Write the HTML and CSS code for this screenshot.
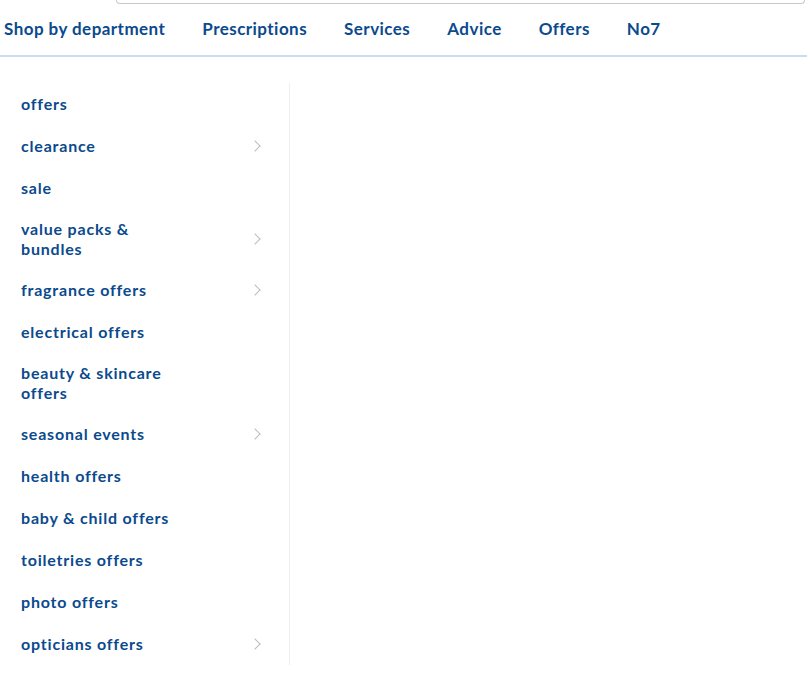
FILE: index.html
```html
<!DOCTYPE html>
<html lang="en">
<head>
<meta charset="utf-8">
<title>Boots menu</title>
<link rel="stylesheet" href="styles.css">
</head>
<body>
<header class="header">
  <div class="search-row"><div class="search-box"></div></div>
  <nav class="topnav">
    <a class="topnav-item">Shop by department</a>
    <a class="topnav-item">Prescriptions</a>
    <a class="topnav-item">Services</a>
    <a class="topnav-item">Advice</a>
    <a class="topnav-item">Offers</a>
    <a class="topnav-item">No7</a>
  </nav>
</header>
<main class="menu">
  <ul class="side">
    <li class="row"><span class="label">offers</span></li>
    <li class="row"><span class="label">clearance</span><span class="chev"></span></li>
    <li class="row"><span class="label">sale</span></li>
    <li class="row"><span class="label">value packs &amp; bundles</span><span class="chev"></span></li>
    <li class="row"><span class="label">fragrance offers</span><span class="chev"></span></li>
    <li class="row"><span class="label">electrical offers</span></li>
    <li class="row"><span class="label">beauty &amp; skincare offers</span></li>
    <li class="row"><span class="label">seasonal events</span><span class="chev"></span></li>
    <li class="row"><span class="label">health offers</span></li>
    <li class="row"><span class="label">baby &amp; child offers</span></li>
    <li class="row"><span class="label">toiletries offers</span></li>
    <li class="row"><span class="label">photo offers</span></li>
    <li class="row"><span class="label">opticians offers</span><span class="chev"></span></li>
  </ul>
  <section class="panel"></section>
</main>
</body>
</html>
```
FILE: styles.css
```css
* { box-sizing: border-box; }
html, body { margin: 0; padding: 0; background: #fff; }
body {
  font-family: Lato, "Open Sans", "Liberation Sans", sans-serif;
  color: #0b4a8d;
  width: 807px;
  height: 698px;
  overflow: hidden;
}
.header { border-bottom: 2px solid #cbdcf1; }
.search-row { height: 4px; padding-left: 116px; padding-right: 2px; }
.search-box {
  height: 4px;
  border: 1px solid #c9c9c9;
  border-top: none;
  border-radius: 0 0 4px 4px;
}
.topnav {
  display: flex;
  gap: 37px;
  padding: 0 0 0 4px;
  height: 51px;
  align-items: center;
}
.topnav-item {
  font-size: 17px;
  font-weight: 700;
  letter-spacing: 0.45px;
  line-height: 22px;
  padding-bottom: 2px;
  white-space: nowrap;
}
.menu {
  display: flex;
  padding-top: 26px;
}
.side {
  list-style: none;
  margin: 0;
  padding: 0 0 0 21px;
  width: 290px;
  border-right: 1px solid #eceff3;
}
.row {
  display: flex;
  align-items: center;
  justify-content: space-between;
  min-height: 42px;
  padding: 10px 26px 10px 0;
  font-size: 16px;
  font-weight: 700;
  letter-spacing: 0.8px;
  line-height: 20px;
}
.label { max-width: 162px; }
.chev {
  width: 8px;
  height: 8px;
  border-right: 1.5px solid #bdbdbd;
  border-top: 1.5px solid #bdbdbd;
  transform: rotate(45deg);
  margin-right: 4px;
  margin-top: -1px;
}
.panel { flex: 1; }
```
